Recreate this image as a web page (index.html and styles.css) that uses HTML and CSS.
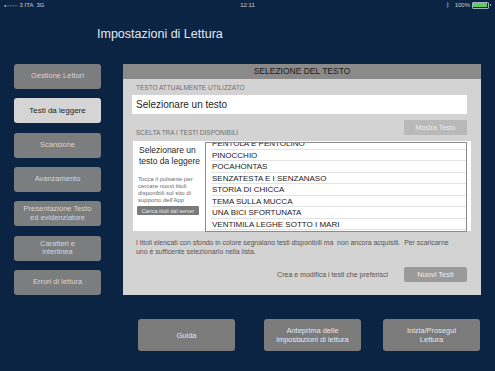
FILE: index.html
```html
<!DOCTYPE html>
<html lang="it">
<head>
    <meta charset="UTF-8">
    <meta name="viewport" content="width=device-width, initial-scale=1.0">
    <title>Impostazioni di Lettura</title>
    <link rel="stylesheet" href="styles.css">
</head>
<body>
    <div class="status-bar">
        <div class="status-left"><span class="dots">●○○○○</span> 3 ITA &nbsp;3G</div>
        <div class="status-time">12:11</div>
        <div class="status-right">
            <span class="bt">ᛒ</span> 100%
            <span class="battery"><span class="battery-fill"></span></span><span class="battery-tip"></span>
        </div>
    </div>

    <h1 class="page-title">Impostazioni di Lettura</h1>

    <div class="main">
        <div class="sidebar">
            <button class="side-btn">Gestione Lettori</button>
            <button class="side-btn active">Testi da leggere</button>
            <button class="side-btn">Scansione</button>
            <button class="side-btn">Avanzamento</button>
            <button class="side-btn">Presentazione Testo<br>ed evidenziatore</button>
            <button class="side-btn">Caratteri e<br>interlinea</button>
            <button class="side-btn">Errori di lettura</button>
        </div>

        <div class="panel">
            <div class="panel-header">SELEZIONE DEL TESTO</div>
            <div class="panel-body">
                <p class="small-label">TESTO ATTUALMENTE UTILIZZATO</p>
                <div class="current-text">Selezionare un testo</div>

                <div class="choice-row">
                    <p class="small-label">SCELTA TRA I TESTI DISPONIBILI</p>
                    <button class="light-btn">Mostra Testo</button>
                </div>

                <div class="choice-box">
                    <div class="choice-info">
                        <p class="choice-title">Selezionare un testo da leggere</p>
                        <p class="choice-hint">Tocca il pulsante per cercare nuovi titoli disponibili sul sito di supporto dell'App</p>
                        <button class="server-btn">Carica titoli dal server</button>
                    </div>
                    <div class="title-list">
                        <ul class="titles">
                            <li>PENTOLA E PENTOLINO</li>
                            <li>PINOCCHIO</li>
                            <li>POCAHONTAS</li>
                            <li>SENZATESTA E I SENZANASO</li>
                            <li>STORIA DI CHICCA</li>
                            <li>TEMA SULLA MUCCA</li>
                            <li>UNA BICI SFORTUNATA</li>
                            <li>VENTIMILA LEGHE SOTTO I MARI</li>
                        </ul>
                    </div>
                </div>

                <p class="note">I titoli elencati con sfondo in colore segnalano testi disponibili ma &nbsp;non ancora acquisiti. &nbsp;Per scaricarne<br>uno è sufficente selezionarlo nella lista.</p>

                <div class="create-row">
                    <span class="create-text">Crea e modifica i testi che preferisci</span>
                    <button class="gray-btn">Nuovi Testi</button>
                </div>
            </div>
        </div>
    </div>

    <div class="bottom-bar">
        <button class="bottom-btn guida">Guida</button>
        <button class="bottom-btn">Anteprima delle<br>impostazioni di lettura</button>
        <button class="bottom-btn">Inizia/Prosegui<br>Lettura</button>
    </div>
</body>
</html>
```

FILE: styles.css
```css
body {
    margin: 0;
    width: 495px;
    height: 371px;
    overflow: hidden;
    background: #0b2443;
    font-family: "Liberation Sans", Arial, sans-serif;
    color: #e4e9ef;
}

button {
    font-family: inherit;
    border: none;
    cursor: pointer;
    padding: 0;
}

/* status bar */
.status-bar {
    height: 10px;
    display: flex;
    align-items: center;
    justify-content: space-between;
    padding: 0 4px;
    font-size: 6px;
    color: #c9d1db;
}
.status-left, .status-right {
    width: 80px;
    display: flex;
    align-items: center;
}
.status-right {
    justify-content: flex-end;
    gap: 2px;
}
.dots {
    font-size: 4px;
    letter-spacing: 0.3px;
    margin-right: 2px;
}
.bt {
    font-size: 6px;
    margin-right: 3px;
}
.battery {
    width: 14px;
    height: 4px;
    border: 1px solid #9fb0c0;
    border-radius: 1px;
    padding: 0.5px;
    display: inline-flex;
    box-sizing: content-box;
}
.battery-fill {
    flex: 1;
    background: #5ad05a;
}
.battery-tip {
    width: 1px;
    height: 2px;
    background: #9fb0c0;
    margin-left: -1px;
}

/* title */
.page-title {
    margin: 0;
    padding: 17px 0 0 97px;
    height: 38px;
    box-sizing: border-box;
    font-size: 12.5px;
    font-weight: normal;
    color: #e2e8ef;
}

.main {
    display: flex;
    padding-top: 16px;
    height: 247px;
    box-sizing: border-box;
}

/* sidebar */
.sidebar {
    width: 87px;
    margin-left: 14px;
    display: flex;
    flex-direction: column;
    gap: 9.5px;
}
.side-btn {
    height: 25px;
    background: #7c7d7f;
    color: #d6d6d6;
    border-radius: 3px;
    font-size: 7.5px;
    line-height: 8.5px;
}
.side-btn.active {
    background: #d5d5d5;
    color: #1e1e1e;
    font-size: 8px;
}

/* panel */
.panel {
    margin-left: 22px;
    width: 358px;
    height: 231px;
    background: #d3d3d3;
    display: flex;
    flex-direction: column;
}
.panel-header {
    height: 15px;
    background: #8a8a8a;
    color: #1c1c1c;
    font-size: 8.5px;
    text-align: center;
    line-height: 15px;
}
.panel-body {
    padding: 5px 14px 0 9px;
    display: flex;
    flex-direction: column;
    color: #333;
}
.small-label {
    margin: 0 0 0 4px;
    font-size: 6.5px;
    color: #6f6f6f;
    line-height: 8px;
}
.current-text {
    margin-top: 3px;
    height: 19px;
    background: #fff;
    font-size: 10px;
    line-height: 19px;
    padding-left: 4px;
    color: #1f1f1f;
}
.choice-row {
    display: flex;
    justify-content: space-between;
    align-items: flex-end;
    margin-top: 6px;
}
.choice-row .small-label {
    margin-bottom: -2px;
}
.light-btn {
    width: 63px;
    height: 15px;
    background: #b9b9b9;
    color: #ececec;
    font-size: 7px;
    border-radius: 1px;
}

/* title chooser */
.choice-box {
    margin-top: 6px;
    margin-left: 1px;
    margin-right: -4px;
    height: 90px;
    background: #fff;
    display: flex;
    padding-right: 4px;
}
.choice-info {
    width: 66px;
    padding: 4px 0 0 6px;
    display: flex;
    flex-direction: column;
}
.choice-title {
    margin: 0;
    font-size: 8.5px;
    line-height: 11px;
    color: #1f1f1f;
}
.choice-hint {
    margin: 9px 0 0 -1px;
    font-size: 6px;
    line-height: 7px;
    color: #6a6a6a;
}
.server-btn {
    margin: 2px 0 0 -2px;
    width: 62px;
    height: 9px;
    background: #7a7a7a;
    color: #e6e6e6;
    font-size: 5.5px;
    border-radius: 1px;
}
.title-list {
    flex: 1;
    margin-top: 1px;
    height: 88px;
    border: 1px solid #8b8b8b;
    overflow: hidden;
}
.titles {
    list-style: none;
    margin: -5px 0 0 0;
    padding: 0 0 0 5px;
}
.titles li {
    height: 11.5px;
    line-height: 11.5px;
    font-size: 8px;
    color: #222;
    border-bottom: 1px solid #e3e3e3;
    padding-left: 1px;
    box-sizing: border-box;
}

.note {
    margin: 8px 0 0 4px;
    font-size: 6.9px;
    line-height: 8.5px;
    color: #555;
}

.create-row {
    margin-top: 11px;
    display: flex;
    justify-content: flex-end;
    align-items: center;
    gap: 16px;
}
.create-text {
    font-size: 7px;
    color: #555;
}
.gray-btn {
    width: 63px;
    height: 15px;
    background: #9a9a9a;
    color: #ececec;
    font-size: 7.5px;
    border-radius: 2px;
}

/* bottom buttons */
.bottom-bar {
    display: flex;
    gap: 22px;
    padding: 24px 0 0 138px;
}
.bottom-btn {
    width: 97px;
    height: 32px;
    background: #7b7b7c;
    color: #e8e8e8;
    font-size: 7.5px;
    line-height: 9px;
    border-radius: 3px;
}
.bottom-btn.guida {
    margin-right: 7px;
}
```
